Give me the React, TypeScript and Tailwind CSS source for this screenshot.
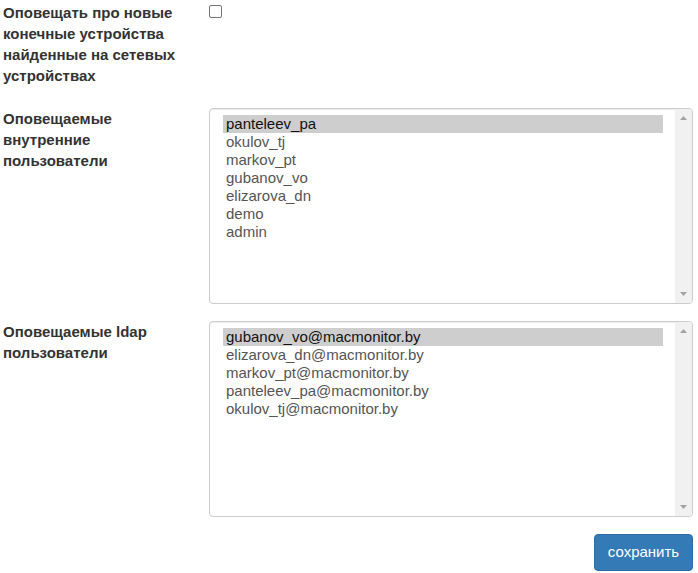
import React from "react";

const internalUsers = ["panteleev_pa", "okulov_tj", "markov_pt", "gubanov_vo", "elizarova_dn", "demo", "admin"];
const ldapUsers = [
  "gubanov_vo@macmonitor.by",
  "elizarova_dn@macmonitor.by",
  "markov_pt@macmonitor.by",
  "panteleev_pa@macmonitor.by",
  "okulov_tj@macmonitor.by",
];

function Arrow({ down }: { down?: boolean }) {
  return (
    <svg width="7" height="4" viewBox="0 0 7 4" className="block">
      {down ? <polygon points="0,0 7,0 3.5,4" fill="#a3a3a3" /> : <polygon points="0,4 7,4 3.5,0" fill="#a3a3a3" />}
    </svg>
  );
}

function MultiSelect({ items }: { items: string[] }) {
  return (
    <div className="flex h-[196px] w-[484px] overflow-hidden rounded-[4px] border border-[#ccc] bg-white shadow-[inset_0_1px_1px_rgba(0,0,0,0.075)]">
      <div className="flex-1 pb-[6px] pl-[13px] pr-[12px] pt-[6px]">
        {items.map((it, i) => (
          <div
            key={it}
            className={
              i === 0
                ? "h-[18px] bg-[#cecece] px-[3px] text-[15px] leading-[18px] text-[#111]"
                : "h-[18px] px-[3px] text-[15px] leading-[18px] text-[#555]"
            }
          >
            {it}
          </div>
        ))}
      </div>
      <div className="flex w-[17px] flex-col items-center justify-between bg-[#f1f1f1] pb-[7px] pt-[7px]">
        <Arrow />
        <Arrow down />
      </div>
    </div>
  );
}

export default function App() {
  return (
    <div className="w-[698px] bg-white text-[15px] text-[#333]" style={{ fontFamily: '"Liberation Sans", Arial, sans-serif' }}>
      <div className="flex pt-[2px]">
        <div className="w-[209px] pl-[3px] font-bold leading-[21px]">
          Оповещать про новые конечные устройства найденные на сетевых устройствах
        </div>
        <div className="pt-[3px]">
          <div className="h-[13px] w-[13px] rounded-[2px] border border-[#767676] bg-white" />
        </div>
      </div>

      <div className="mt-[22px] flex">
        <div className="w-[209px] pl-[3px] font-bold leading-[21px]">
          Оповещаемые
          <br />
          внутренние
          <br />
          пользователи
        </div>
        <MultiSelect items={internalUsers} />
      </div>

      <div className="mt-[17px] flex">
        <div className="w-[209px] pl-[3px] font-bold leading-[21px]">
          Оповещаемые ldap
          <br />
          пользователи
        </div>
        <MultiSelect items={ldapUsers} />
      </div>

      <div className="mt-[17px] flex justify-end pr-[5px]">
        <button className="h-[37px] w-[99px] rounded-[4px] border border-[#2e6da4] bg-[#337ab7] text-[15px] text-white">
          сохранить
        </button>
      </div>
    </div>
  );
}
